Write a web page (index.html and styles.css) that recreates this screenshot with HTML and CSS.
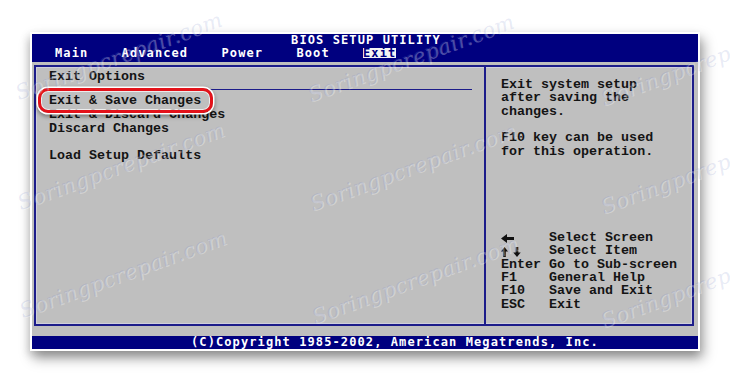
FILE: index.html
```html
<!DOCTYPE html>
<html>
<head>
<meta charset="utf-8">
<link rel="stylesheet" href="styles.css">
</head>
<body>
<div class="window">
  <div class="header">
    <div class="title">BIOS SETUP UTILITY</div>
    <div class="menu">Main    Advanced    Power    Boot    <span class="active">Exit</span></div>
  </div>
  <div class="main">
    <div class="frame">
      <div class="left">
        <div class="section">Exit Options</div>
        <div class="rule"></div>
        <div class="items">
          <div class="item selected">Exit &amp; Save Changes</div>
          <div class="item">Exit &amp; Discard Changes</div>
          <div class="item">Discard Changes</div>
          <div class="item blank"></div>
          <div class="item">Load Setup Defaults</div>
        </div>
      </div>
      <div class="right">
        <div class="desc">
          <div class="line">Exit system setup</div>
          <div class="line">after saving the</div>
          <div class="line">changes.</div>
          <div class="line blank"></div>
          <div class="line">F10 key can be used</div>
          <div class="line">for this operation.</div>
        </div>
        <div class="help">
          <div class="key"><svg class="ico" width="13" height="9" viewBox="0 0 13 9"><polygon points="0,4.5 6,0 6,9" fill="#111"/><rect x="5" y="3" width="8" height="3" fill="#111"/></svg></div>
          <div class="val">Select Screen</div>
          <div class="key"><svg class="ico" width="21" height="10" viewBox="0 0 21 10"><polygon points="3.5,0 0,4.5 7,4.5" fill="#111"/><rect x="2.2" y="4" width="2.6" height="6" fill="#111"/><polygon points="16,10 12.3,5.5 19.7,5.5" fill="#111"/><rect x="14.7" y="0" width="2.6" height="6" fill="#111"/></svg></div>
          <div class="val">Select Item</div>
          <div class="key">Enter</div>
          <div class="val">Go to Sub-screen</div>
          <div class="key">F1</div>
          <div class="val">General Help</div>
          <div class="key">F10</div>
          <div class="val">Save and Exit</div>
          <div class="key">ESC</div>
          <div class="val">Exit</div>
        </div>
      </div>
    </div>
  </div>
  <div class="footer">(C)Copyright 1985-2002, American Megatrends, Inc.</div>
</div>
<div class="wm">
  <span class="wmt w1">Soringpcrepair.com</span>
  <span class="wmt w2">Soringpcrepair.com</span>
  <span class="wmt w3">Soringpcrepair.com</span>
  <span class="wmt w4">Soringpcrepair.com</span>
  <span class="wmt w5">Soringpcrepair.com</span>
  <span class="wmt w6">Soringpcrepair.com</span>
  <span class="wmt w7">Soringpcrepair.com</span>
  <span class="wmt w8">Soringpcrepair.com</span>
  <span class="wmt w9">Soringpcrepair.com</span>
</div>
</body>
</html>
```

FILE: styles.css
```css
html, body {
  margin: 0;
  padding: 0;
  background: #ffffff;
}
body {
  width: 731px;
  height: 382px;
  overflow: hidden;
  position: relative;
}
.window {
  margin: 32px 0 0 30px;
  width: 666px;
  border: 2px solid #ffffff;
  box-shadow: 3px 7px 12px rgba(0, 0, 0, 0.4), -2px 4px 8px rgba(0, 0, 0, 0.12);
  background: #bfbfbf;
}
.header {
  background: #00007f;
  color: #ffffff;
  height: 28px;
  box-sizing: border-box;
  font-family: "DejaVu Sans Mono", monospace;
  font-weight: bold;
  font-size: 12px;
  letter-spacing: 1.1px;
}
.title {
  line-height: 12px;
  text-align: center;
  padding-left: 2px;
}
.menu {
  margin-top: 2px;
  line-height: 10px;
  height: 10px;
  white-space: pre;
  padding-left: 23px;
}
.active {
  display: inline-block;
  background: #f4f4f4;
  color: #00007f;
  height: 10px;
}
.main {
  height: 274px;
  box-sizing: border-box;
  padding: 3px 4px 10px 2px;
  background: #bfbfbf;
}
.frame {
  height: 100%;
  box-sizing: border-box;
  border: 2px solid #1c1c8a;
  box-shadow: inset 0 0 0 1px #cfcfdc;
  display: flex;
  font-family: "Courier New", "Nimbus Mono PS", "Nimbus Mono L", "FreeMono", "Liberation Mono", monospace;
  font-weight: bold;
  font-size: 13.35px;
  color: #141414;
}
.left {
  width: 448px;
  box-sizing: border-box;
  padding: 3px 0 0 13px;
}
.section {
  line-height: 13.33px;
  height: 13.33px;
}
.rule {
  margin: 6px 12px 0 -2px;
  height: 1px;
  background: #1c1c8a;
}
.items {
  margin-top: 4px;
}
.item {
  line-height: 13.6px;
  height: 13.6px;
  white-space: pre;
}
.selected {
  position: relative;
}
.selected::after {
  content: "";
  position: absolute;
  left: -11px;
  top: -6px;
  width: 175px;
  height: 25px;
  box-sizing: border-box;
  border: 3px solid #e3121a;
  border-radius: 10px;
  box-shadow: 0 0 0 1.5px #ffffff, 0 2px 4px 1.5px rgba(0, 0, 0, 0.4), inset 0 0 0 1px rgba(255, 255, 255, 0.7);
}
.right {
  flex: 1;
  border-left: 2px solid #1c1c8a;
  box-sizing: border-box;
  padding: 11px 0 13px 15px;
  display: flex;
  flex-direction: column;
}
.line {
  line-height: 13.33px;
  height: 13.33px;
  white-space: pre;
}
.help {
  margin-top: auto;
  display: grid;
  grid-template-columns: 48px auto;
  grid-auto-rows: 13.33px;
  line-height: 13.33px;
}
.key {
  display: flex;
  align-items: center;
}
.ico {
  display: block;
  margin-top: 1px;
}
.footer {
  background: #00007f;
  color: #ffffff;
  height: 13px;
  line-height: 13px;
  padding-left: 159px;
  font-family: "DejaVu Sans Mono", monospace;
  font-weight: bold;
  font-size: 12px;
  letter-spacing: 1.1px;
  white-space: pre;
}
.wm {
  position: absolute;
  left: 0;
  top: 0;
  width: 731px;
  height: 382px;
  pointer-events: none;
  overflow: hidden;
}
.wmt {
  position: absolute;
  font-family: "DejaVu Serif", "Liberation Serif", serif;
  font-style: italic;
  font-size: 21px;
  line-height: 22px;
  letter-spacing: 0.5px;
  color: rgba(120, 135, 200, 0.18);
  text-shadow: 1px 1px 0 rgba(255, 255, 255, 0.3);
  transform-origin: 0 100%;
  transform: rotate(-20deg);
  white-space: nowrap;
}
.w1 { left: 20px; top: 82px; }
.w2 { left: 312px; top: 84px; }
.w3 { left: 605px; top: 88px; }
.w4 { left: 22px; top: 192px; }
.w5 { left: 314px; top: 193px; }
.w6 { left: 605px; top: 196px; }
.w7 { left: 24px; top: 300px; }
.w8 { left: 316px; top: 306px; }
.w9 { left: 605px; top: 310px; }
```
